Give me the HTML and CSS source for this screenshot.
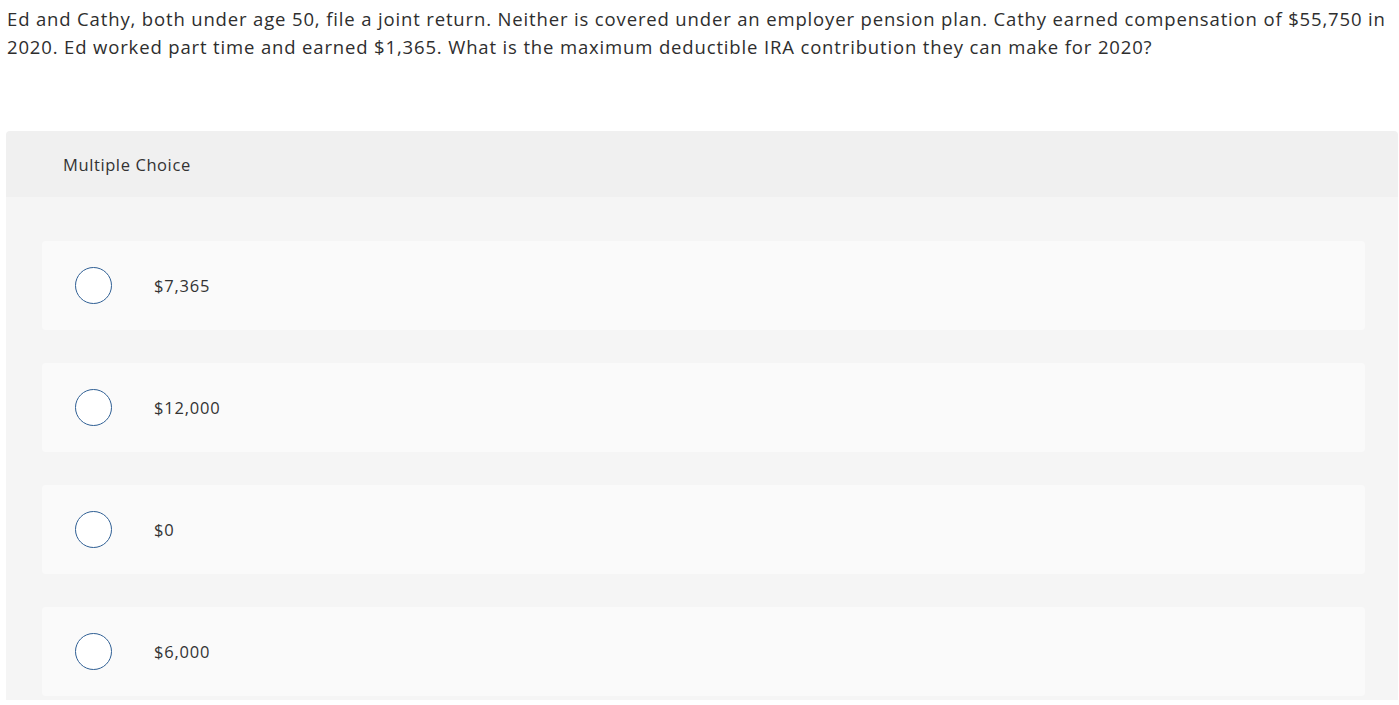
FILE: index.html
```html
<!DOCTYPE html>
<html>
<head>
<meta charset="utf-8">
<link rel="stylesheet" href="styles.css">
</head>
<body>
<div class="question">Ed and Cathy, both under age 50, file a joint return. Neither is covered under an employer pension plan. Cathy earned compensation of $55,750 in 2020. Ed worked part time and earned $1,365. What is the maximum deductible IRA contribution they can make for 2020?</div>
<div class="panel">
  <div class="panel-head">Multiple Choice</div>
  <div class="panel-body">
    <div class="option"><span class="radio"></span><span class="label">$7,365</span></div>
    <div class="option"><span class="radio"></span><span class="label">$12,000</span></div>
    <div class="option"><span class="radio"></span><span class="label">$0</span></div>
    <div class="option"><span class="radio"></span><span class="label">$6,000</span></div>
  </div>
</div>
</body>
</html>
```
FILE: styles.css
```css
html, body {
  margin: 0;
  padding: 0;
  background: #fff;
}
body {
  font-family: "Open Sans", sans-serif;
  color: #2e2e2e;
}
.question {
  padding: 5px 4px 0 7px;
  font-size: 18.5px;
  line-height: 28px;
  letter-spacing: 0.85px;
  width: 1399px;
  box-sizing: border-box;
}
.panel {
  margin: 70px 1px 0 6px;
  border-radius: 4px 4px 0 0;
  overflow: hidden;
}
.panel-head {
  background: #f0f0f0;
  height: 66px;
  display: flex;
  align-items: center;
  padding-left: 57px;
  font-size: 16.5px;
  letter-spacing: 0.6px;
  color: #333;
}
.panel-body {
  background: #f5f5f5;
  padding: 44px 33px 4px 36px;
  display: flex;
  flex-direction: column;
  gap: 33px;
}
.option {
  background: #fafafa;
  border-radius: 4px;
  height: 89px;
  display: flex;
  align-items: center;
  padding-left: 33px;
}
.radio {
  width: 35px;
  height: 35px;
  border: 1.5px solid #2f5f94;
  border-radius: 50%;
  background: #fff;
  flex: none;
}
.label {
  margin-left: 42px;
  font-size: 16.5px;
  letter-spacing: 0.8px;
  color: #333;
}
```
